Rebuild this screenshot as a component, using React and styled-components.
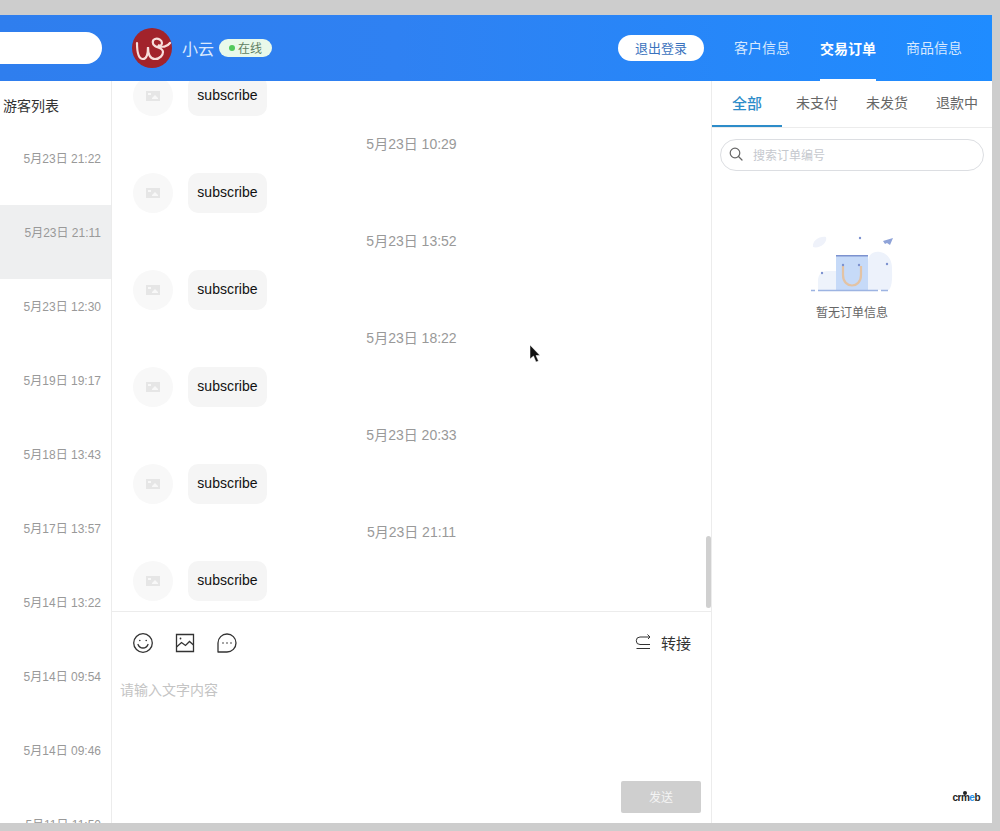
import styled, { createGlobalStyle } from "styled-components";

const GlobalStyle = createGlobalStyle`
  html, body {
    margin: 0;
    padding: 0;
    background: #cdcdcd;
    overflow: hidden;
  }
  * {
    box-sizing: border-box;
  }
  #root {
    width: 1000px;
    height: 831px;
    padding: 15px 8px 8px 0;
    font-family: "Liberation Sans", "Noto Sans CJK SC", sans-serif;
  }
`;

const Frame = styled.div`
  position: relative;
  display: flex;
  flex-direction: column;
  height: 808px;
  background: #fff;
  overflow: hidden;
`;

const Header = styled.header`
  display: flex;
  align-items: center;
  flex: 0 0 66px;
  background: linear-gradient(90deg, #2f7eee 0%, #2f81f2 40%, #1f8cff 100%);
`;

const HeaderSearch = styled.div`
  width: 102px;
  height: 32px;
  margin-right: 30px;
  background: #fff;
  border-radius: 0 16px 16px 0;
`;

const UserName = styled.span`
  margin-left: 10px;
  font-size: 16px;
  color: #dbe9fd;
`;

const OnlineBadge = styled.span`
  display: flex;
  align-items: center;
  justify-content: center;
  gap: 3px;
  width: 53px;
  height: 18px;
  margin-left: 5px;
  padding-bottom: 1px;
  border-radius: 9px;
  background: #e9f9ea;
  font-size: 12px;
  color: #5f7f62;

  &::before {
    content: "";
    width: 6px;
    height: 6px;
    border-radius: 50%;
    background: #52c95c;
  }
`;

const LogoutButton = styled.button`
  width: 86px;
  height: 26px;
  margin-left: auto;
  padding: 0 0 2px;
  border: 0;
  border-radius: 13px;
  background: #fff;
  font-family: inherit;
  font-size: 13px;
  color: #3a72bd;
`;

const HeaderNav = styled.nav`
  display: flex;
  align-self: stretch;
  gap: 30px;
  margin: 0 30px;
`;

const NavItem = styled.div`
  display: flex;
  align-items: center;
  padding-top: ${(p) => (p.$active ? "1px" : "0")};
  font-size: 14px;
  font-weight: ${(p) => (p.$active ? 700 : 400)};
  color: ${(p) => (p.$active ? "#fff" : "#d6e8fe")};
  border-bottom: 2px solid ${(p) => (p.$active ? "#fff" : "transparent")};
`;

const Body = styled.div`
  display: flex;
  flex: 1;
  min-height: 0;
`;

const Sidebar = styled.aside`
  flex: 0 0 112px;
  border-right: 1px solid #ececec;
  overflow: hidden;
`;

const SidebarTitle = styled.div`
  height: 50px;
  padding-left: 3px;
  line-height: 50px;
  font-size: 14px;
  color: #333;
`;

const VisitorRow = styled.div`
  height: 74px;
  padding: 20px 10px 0 0;
  line-height: 16px;
  text-align: right;
  font-size: 12px;
  color: #999;
  background: ${(p) => (p.$active ? "#eeeff0" : "transparent")};
`;

const ChatPanel = styled.main`
  position: relative;
  display: flex;
  flex-direction: column;
  flex: 0 0 600px;
  border-right: 1px solid #ececec;
`;

const MessageList = styled.div`
  display: flex;
  flex-direction: column;
  justify-content: flex-end;
  flex: 0 0 530px;
  padding: 0 21px 10px;
  overflow: hidden;
`;

const MessageGroup = styled.div`
  flex: none;
  padding-bottom: 16px;

  &:last-child {
    padding-bottom: 0;
  }
`;

const MessageTime = styled.div`
  height: 24px;
  margin-bottom: 17px;
  line-height: 24px;
  text-align: center;
  font-size: 14px;
  color: #999;
`;

const MessageRow = styled.div`
  display: flex;
  align-items: center;
  gap: 15px;
  height: 40px;
`;

const AvatarHolder = styled.div`
  display: flex;
  align-items: center;
  justify-content: center;
  width: 40px;
  height: 40px;
  border-radius: 50%;
  background: #f8f8f8;
`;

const Bubble = styled.div`
  width: 79px;
  height: 40px;
  border-radius: 10px;
  background: #f5f5f5;
  line-height: 38px;
  text-align: center;
  font-size: 14px;
  letter-spacing: 0.05px;
  color: #111;
`;

const ScrollThumb = styled.div`
  position: absolute;
  top: 455px;
  right: 0;
  width: 5px;
  height: 72px;
  border-radius: 3px;
  background: #d0d0d0;
`;

const Composer = styled.section`
  display: flex;
  flex-direction: column;
  flex: 1;
  border-top: 1px solid #ececec;
`;

const ComposerToolbar = styled.div`
  display: flex;
  align-items: center;
  flex: 0 0 62px;
  padding: 0 20px 0 21px;
  gap: 22px;
`;

const TransferAction = styled.div`
  display: flex;
  align-items: center;
  gap: 10px;
  margin-left: auto;
  padding-bottom: 2px;
  font-size: 15px;
  color: #333;
`;

const MessageInput = styled.textarea`
  flex: 1;
  padding: 4px 8px;
  border: 0;
  outline: 0;
  resize: none;
  font-family: inherit;
  font-size: 14px;
  line-height: 24px;

  &::placeholder {
    color: #c4c4c4;
  }
`;

const SendButton = styled.button`
  align-self: flex-end;
  width: 80px;
  height: 32px;
  margin: 0 10px 10px 0;
  padding: 0 0 1px;
  border: 0;
  border-radius: 2px;
  background: #cfcfcf;
  font-family: inherit;
  font-size: 12px;
  color: #f4f4f4;
`;

const OrderPanel = styled.aside`
  display: flex;
  flex-direction: column;
  flex: 1;
`;

const OrderTabs = styled.div`
  display: flex;
  flex: 0 0 46px;
  border-bottom: 1px solid #ececec;
`;

const OrderTab = styled.div`
  width: 70px;
  height: 46px;
  padding-top: ${(p) => (p.$active ? "1px" : "0")};
  line-height: 44px;
  text-align: center;
  font-size: ${(p) => (p.$active ? "15px" : "14px")};
  font-weight: ${(p) => (p.$active ? 500 : 400)};
  color: ${(p) => (p.$active ? "#2d8cc9" : "#666")};
  border-bottom: 2px solid ${(p) => (p.$active ? "#2d8cc9" : "transparent")};
`;

const OrderSearch = styled.div`
  display: flex;
  align-items: center;
  gap: 10px;
  height: 32px;
  margin: 11px 8px 0;
  padding: 0 0 2px 8px;
  border: 1px solid #dcdee2;
  border-radius: 16px;
  font-size: 12px;
  color: #c5c8ce;
`;

const EmptyState = styled.div`
  display: flex;
  flex-direction: column;
  align-items: center;
  margin-top: 50px;
  font-size: 12px;
  line-height: 24px;
  color: #666;
`;

const BrandMark = styled.div`
  margin: auto 12px 19px auto;
  font-size: 10px;
  font-weight: 700;
  line-height: 12px;
  letter-spacing: -0.5px;
  color: #222;

  em {
    font-style: normal;
    color: #2a90e8;
  }
`;

const BrandPeak = styled.span`
  position: relative;

  &::before {
    content: "";
    position: absolute;
    top: -1px;
    left: 50%;
    width: 4px;
    height: 4px;
    margin-left: -2px;
    border-radius: 50%;
    background: #222;
  }
`;

const Cursor = styled.svg`
  position: absolute;
  left: 529px;
  top: 329px;
`;

const LogoMark = () => (
  <svg width="40" height="40" viewBox="0 0 40 40">
    <circle cx="20" cy="20" r="20" fill="#a2232b" />
    <path
      d="M5 15C5 24 6 31 11 31C15 31 16 25 16 19C16 26 18 31 23 31C28 31 31 27 31 24C31 20 26 20 23 18C20 16 20 12 23 11C26 10 30 12 30 15C30 18 27 18 26 17C30 20 35 19 38 15"
      fill="none"
      stroke="#f8dedb"
      strokeWidth="2.200"
      strokeLinecap="round"
    />
  </svg>
);

const PictureHolder = () => (
  <svg width="14" height="12" viewBox="0 0 14 12">
    <path fill="#e6e6e6" d="M0 1h14v10H0z" />
    <path fill="#f8f8f8" d="M2 3h3v2H2zM6 8l3-3 3 3v1H6z" />
  </svg>
);

const SmileIcon = () => (
  <svg width="20" height="20" viewBox="0 0 20 20" fill="none" stroke="#333" strokeWidth="1.300">
    <circle cx="10" cy="10" r="9.300" />
    <path d="M5 11.500c1 2.500 3 3.500 5 3.500s4-1 5-3.500" strokeLinecap="round" />
    <circle cx="6.800" cy="7.500" r="0.800" fill="#333" stroke="none" />
    <circle cx="13.200" cy="7.500" r="0.800" fill="#333" stroke="none" />
  </svg>
);

const ImageIcon = () => (
  <svg width="20" height="20" viewBox="0 0 20 20" fill="none" stroke="#333" strokeWidth="1.300">
    <path d="M1.500 1.500h17v17h-17z" />
    <path d="M1.500 14l5-4.500 4 3 4-4 4 3.500" />
    <circle cx="5.500" cy="5.500" r="0.900" fill="#333" stroke="none" />
  </svg>
);

const ChatIcon = () => (
  <svg width="20" height="20" viewBox="0 0 20 20" fill="none" stroke="#333" strokeWidth="1.300">
    <path d="M1 19V10a9 9 0 1 1 9 9z" strokeLinejoin="round" />
    <circle cx="6" cy="10" r="0.800" fill="#333" stroke="none" />
    <circle cx="10" cy="10" r="0.800" fill="#333" stroke="none" />
    <circle cx="14" cy="10" r="0.800" fill="#333" stroke="none" />
  </svg>
);

const TransferIcon = () => (
  <svg width="16" height="16" viewBox="0 0 16 16" fill="none" stroke="#333" strokeWidth="1">
    <path d="M15 3H5a3.500 3.500 0 0 0 0 7.500h10M1.500 14.500H15M12.500 0.500L15 3l-2 2" />
  </svg>
);

const SearchIcon = () => (
  <svg width="14" height="14" viewBox="0 0 14 14" fill="none" stroke="#666" strokeWidth="1.200">
    <circle cx="6" cy="6" r="4.800" />
    <path d="M9.500 9.500L13 13" strokeLinecap="round" />
  </svg>
);

// 空订单插图
const EmptyOrderArt = () => (
  <svg width="120" height="80" viewBox="2 1 120 80">
    <path fill="#edf2fb" d="M78 70V42c0-8 6-11 12-10s12 6 12 16c0 8 1 16-3 22z" />
    <path fill="#eef3fb" d="M28 70V60c0-6 5-9 9-9h9v19z" />
    <path fill="#eff2fa" d="M23 27c-1-6 6-11 13-10 2 6-7 12-13 10z" />
    <path fill="#c6daf8" d="M46 35h32v35H46z" />
    <path fill="#7c92cf" d="M46 35h32v1.500H46z" />
    <path d="M53 46v9c0 14 18 14 18 0v-9" fill="none" stroke="#e3c3a4" strokeWidth="2.200" />
    <circle cx="53" cy="45" r="1.200" fill="#7c92cf" />
    <circle cx="69" cy="45" r="1.200" fill="#7c92cf" />
    <path fill="#8fa3d8" d="M93 21l10-3-3 7-3-2-2 1z" />
    <circle cx="70" cy="18" r="1.200" fill="#7c92cf" />
    <circle cx="32" cy="53" r="1.200" fill="#7c92cf" />
    <circle cx="97" cy="44" r="1.200" fill="#7c92cf" />
    <path d="M21 70.500h4M28 70.500h60M91 70.500h7" stroke="#9db4e2" strokeWidth="1.300" />
  </svg>
);

const ArrowCursor = () => (
  <Cursor width="14" height="20" viewBox="0 0 14 20">
    <path d="M1 1v14l3.500-3 2.500 6 2.500-1-2.500-5.500H11z" fill="#111" stroke="#fff" strokeWidth="0.500" />
  </Cursor>
);

const visitorTimes = [
  "5月23日 21:22",
  "5月23日 21:11",
  "5月23日 12:30",
  "5月19日 19:17",
  "5月18日 13:43",
  "5月17日 13:57",
  "5月14日 13:22",
  "5月14日 09:54",
  "5月14日 09:46",
  "5月11日 11:50",
];

const messageTimes = [
  "5月23日 10:29",
  "5月23日 13:52",
  "5月23日 18:22",
  "5月23日 20:33",
  "5月23日 21:11",
];

const Message = () => (
  <MessageRow>
    <AvatarHolder>
      <PictureHolder />
    </AvatarHolder>
    <Bubble>subscribe</Bubble>
  </MessageRow>
);

const App = () => {
  return (
    <>
      <GlobalStyle />
      <Frame>
        <Header>
          <HeaderSearch />
          <LogoMark />
          <UserName>小云</UserName>
          <OnlineBadge>在线</OnlineBadge>
          <LogoutButton>退出登录</LogoutButton>
          <HeaderNav>
            <NavItem>客户信息</NavItem>
            <NavItem $active>交易订单</NavItem>
            <NavItem>商品信息</NavItem>
          </HeaderNav>
        </Header>
        <Body>
          <Sidebar>
            <SidebarTitle>游客列表</SidebarTitle>
            {visitorTimes.map((time, index) => (
              <VisitorRow key={time} $active={index === 1}>
                {time}
              </VisitorRow>
            ))}
          </Sidebar>
          <ChatPanel>
            <MessageList>
              <MessageGroup>
                <Message />
              </MessageGroup>
              {messageTimes.map((time) => (
                <MessageGroup key={time}>
                  <MessageTime>{time}</MessageTime>
                  <Message />
                </MessageGroup>
              ))}
            </MessageList>
            <ScrollThumb />
            <Composer>
              <ComposerToolbar>
                <SmileIcon />
                <ImageIcon />
                <ChatIcon />
                <TransferAction>
                  <TransferIcon />
                  转接
                </TransferAction>
              </ComposerToolbar>
              <MessageInput placeholder="请输入文字内容" />
              <SendButton>发送</SendButton>
            </Composer>
          </ChatPanel>
          <OrderPanel>
            <OrderTabs>
              <OrderTab $active>全部</OrderTab>
              <OrderTab>未支付</OrderTab>
              <OrderTab>未发货</OrderTab>
              <OrderTab>退款中</OrderTab>
            </OrderTabs>
            <OrderSearch>
              <SearchIcon />
              搜索订单编号
            </OrderSearch>
            <EmptyState>
              <EmptyOrderArt />
              暂无订单信息
            </EmptyState>
            <BrandMark>
              cr<BrandPeak>m</BrandPeak>
              <em>e</em>b
            </BrandMark>
          </OrderPanel>
        </Body>
        <ArrowCursor />
      </Frame>
    </>
  );
};

export default App;
